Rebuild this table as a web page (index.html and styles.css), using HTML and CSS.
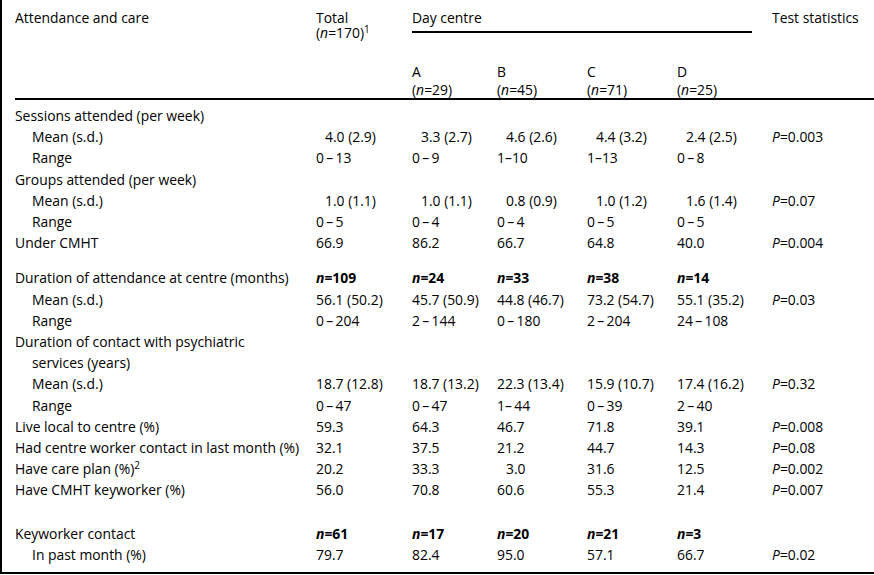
FILE: index.html
```html
<!DOCTYPE html>
<html lang="en">
<head>
<meta charset="utf-8">
<title>Attendance and care</title>
<link rel="stylesheet" href="styles.css">
</head>
<body>
<div class="frame">
<table class="tbl">
<colgroup>
<col class="c-lbl"><col class="c-tot"><col class="c-a"><col class="c-b"><col class="c-c"><col class="c-d"><col class="c-p">
</colgroup>
<thead>
<tr class="h1">
<th rowspan="2" class="hl">Attendance and care</th>
<th rowspan="2" class="ht">Total<br>(<i>n</i>=170)<sup>1</sup></th>
<th colspan="4" class="hd"><div class="dc">Day centre</div></th>
<th rowspan="2" class="hp">Test statistics</th>
</tr>
<tr class="h2">
<th class="hc">A<br>(<i>n</i>=29)</th>
<th class="hc">B<br>(<i>n</i>=45)</th>
<th class="hc">C<br>(<i>n</i>=71)</th>
<th class="hc">D<br>(<i>n</i>=25)</th>
</tr>
</thead>
<tbody>
<tr class="first"><td>Sessions attended (per week)</td><td></td><td></td><td></td><td></td><td></td><td></td></tr>
<tr><td class="sub">Mean (s.d.)</td><td class="pad">4.0 (2.9)</td><td class="pad">3.3 (2.7)</td><td class="pad">4.6 (2.6)</td><td class="pad">4.4 (3.2)</td><td class="pad">2.4 (2.5)</td><td><i>P</i>=0.003</td></tr>
<tr><td class="sub">Range</td><td>0&#8201;–&#8201;13</td><td>0&#8201;–&#8201;9</td><td>1–10</td><td>1–13</td><td>0&#8201;–&#8201;8</td><td></td></tr>
<tr><td>Groups attended (per week)</td><td></td><td></td><td></td><td></td><td></td><td></td></tr>
<tr><td class="sub">Mean (s.d.)</td><td class="pad">1.0 (1.1)</td><td class="pad">1.0 (1.1)</td><td class="pad">0.8 (0.9)</td><td class="pad">1.0 (1.2)</td><td class="pad">1.6 (1.4)</td><td><i>P</i>=0.07</td></tr>
<tr><td class="sub">Range</td><td>0&#8201;–&#8201;5</td><td>0&#8201;–&#8201;4</td><td>0&#8201;–&#8201;4</td><td>0&#8201;–&#8201;5</td><td>0&#8201;–&#8201;5</td><td></td></tr>
<tr><td>Under CMHT</td><td>66.9</td><td>86.2</td><td>66.7</td><td>64.8</td><td>40.0</td><td><i>P</i>=0.004</td></tr>

<tr class="gap1"><td>Duration of attendance at centre (months)</td><td class="b"><i>n</i>=109</td><td class="b"><i>n</i>=24</td><td class="b"><i>n</i>=33</td><td class="b"><i>n</i>=38</td><td class="b"><i>n</i>=14</td><td></td></tr>
<tr><td class="sub">Mean (s.d.)</td><td>56.1 (50.2)</td><td>45.7 (50.9)</td><td>44.8 (46.7)</td><td>73.2 (54.7)</td><td>55.1 (35.2)</td><td><i>P</i>=0.03</td></tr>
<tr><td class="sub">Range</td><td>0&#8201;–&#8201;204</td><td>2&#8201;–&#8201;144</td><td>0&#8201;–&#8201;180</td><td>2&#8201;–&#8201;204</td><td>24&#8201;–&#8201;108</td><td></td></tr>
<tr><td class="hang">Duration of contact with psychiatric<br>services (years)</td><td></td><td></td><td></td><td></td><td></td><td></td></tr>
<tr><td class="sub">Mean (s.d.)</td><td>18.7 (12.8)</td><td>18.7 (13.2)</td><td>22.3 (13.4)</td><td>15.9 (10.7)</td><td>17.4 (16.2)</td><td><i>P</i>=0.32</td></tr>
<tr><td class="sub">Range</td><td>0&#8201;–&#8201;47</td><td>0&#8201;–&#8201;47</td><td>1–&#8201;44</td><td>0&#8201;–&#8201;39</td><td>2&#8201;–&#8201;40</td><td></td></tr>
<tr><td>Live local to centre (%)</td><td>59.3</td><td>64.3</td><td>46.7</td><td>71.8</td><td>39.1</td><td><i>P</i>=0.008</td></tr>
<tr><td>Had centre worker contact in last month (%)</td><td>32.1</td><td>37.5</td><td>21.2</td><td>44.7</td><td>14.3</td><td><i>P</i>=0.08</td></tr>
<tr><td>Have care plan (%)<sup>2</sup></td><td>20.2</td><td>33.3</td><td class="pad">3.0</td><td>31.6</td><td>12.5</td><td><i>P</i>=0.002</td></tr>
<tr><td>Have CMHT keyworker (%)</td><td>56.0</td><td>70.8</td><td>60.6</td><td>55.3</td><td>21.4</td><td><i>P</i>=0.007</td></tr>

<tr class="gap2"><td>Keyworker contact</td><td class="b"><i>n</i>=61</td><td class="b"><i>n</i>=17</td><td class="b"><i>n</i>=20</td><td class="b"><i>n</i>=21</td><td class="b"><i>n</i>=3</td><td></td></tr>
<tr><td class="sub">In past month (%)</td><td>79.7</td><td>82.4</td><td>95.0</td><td>57.1</td><td>66.7</td><td><i>P</i>=0.02</td></tr>
</tbody>
</table>
</div>
</body>
</html>
```

FILE: styles.css
```css
html, body {
  margin: 0;
  padding: 0;
  background: #ffffff;
}

body {
  font-family: "Open Sans", "Noto Sans", "DejaVu Sans", sans-serif;
  font-size: 13.9px;
  color: #000000;
}

.frame {
  box-sizing: border-box;
  width: 874px;
  height: 574px;
  border-left: 2px solid #000000;
  border-bottom: 2px solid #000000;
  padding-left: 13px;
}

.tbl {
  border-collapse: separate;
  border-spacing: 0;
  table-layout: fixed;
  width: 859px;
}

.c-lbl { width: 301px; }
.c-tot { width: 96px; }
.c-a { width: 85px; }
.c-b { width: 90px; }
.c-c { width: 90px; }
.c-d { width: 95px; }
.c-p { width: 102px; }

.tbl th,
.tbl td {
  padding: 0;
  text-align: left;
  font-weight: normal;
  white-space: nowrap;
  vertical-align: top;
}

.tbl td {
  line-height: 21.2px;
}

.tbl sup {
  font-size: 10px;
  line-height: 0;
  vertical-align: 5px;
}

/* header */
.tbl .hl,
.tbl .hp {
  padding-top: 11px;
  line-height: 14px;
  border-bottom: 2px solid #000000;
}

.tbl .ht {
  padding-top: 10px;
  line-height: 15px;
  border-bottom: 2px solid #000000;
}

.tbl .hd {
  padding-top: 11px;
  line-height: 14px;
}

.dc {
  margin-right: 20px;
  padding-bottom: 6px;
  border-bottom: 2px solid #000000;
}

.tbl .hc {
  padding-top: 30px;
  line-height: 17.5px;
  border-bottom: 2px solid #000000;
}

/* body */
.tbl .first td { padding-top: 5px; }
.tbl .gap1 td { padding-top: 14px; }
.tbl .gap2 td { padding-top: 22px; }

.tbl .sub { padding-left: 17px; }

.tbl .hang {
  padding-left: 17px;
  text-indent: -17px;
}

.tbl .pad { padding-left: 9px; }

.tbl .b { font-weight: bold; }
```
